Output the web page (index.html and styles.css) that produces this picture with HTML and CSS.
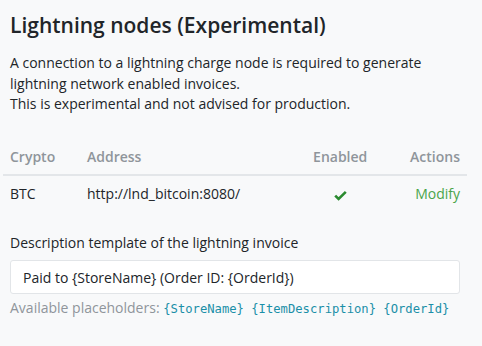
FILE: index.html
```html
<!DOCTYPE html>
<html lang="en">
<head>
  <meta charset="UTF-8">
  <title>Lightning nodes</title>
  <link rel="stylesheet" href="styles.css">
</head>
<body>
  <main class="section">
    <h3>Lightning nodes (Experimental)</h3>
    <p class="intro">
      A connection to a lightning charge node is required to generate lightning network enabled invoices.<br>
      This is experimental and not advised for production.
    </p>

    <table class="nodes">
      <thead>
        <tr>
          <th class="col-crypto">Crypto</th>
          <th>Address</th>
          <th class="center">Enabled</th>
          <th class="right">Actions</th>
        </tr>
      </thead>
      <tbody>
        <tr>
          <td>BTC</td>
          <td>http://lnd_bitcoin:8080/</td>
          <td class="center">
            <svg class="check" width="13" height="11" viewBox="0 0 13 11">
              <path d="M1.2 5.6 L4.6 9 L11.8 1.8" fill="none" stroke="#2a8a2f" stroke-width="2.6"/>
            </svg>
          </td>
          <td class="right"><a href="#">Modify</a></td>
        </tr>
      </tbody>
    </table>

    <div class="form-group">
      <label for="template">Description template of the lightning invoice</label>
      <input type="text" id="template" value="Paid to {StoreName} (Order ID: {OrderId})">
      <p class="help">Available placeholders: <code>{StoreName} {ItemDescription} {OrderId}</code></p>
    </div>
  </main>
</body>
</html>
```

FILE: styles.css
```css
/* General styles */
body {
  margin: 0;
  background-color: #f8f9fa;
  font-family: "Open Sans", Arial, sans-serif;
  font-size: 14px;
  color: #212529;
}
.section {
  padding: 10px 22px 0 10px;
}
h3 {
  margin: 0;
  font-size: 21px;
  font-weight: 600;
  line-height: 30px;
}
.intro {
  margin: 13px 0 0;
  line-height: 20.7px;
}

/* Table */
.nodes {
  width: calc(100% + 14px);
  margin: 24px 0 0 -7px;
  border-collapse: collapse;
}
.nodes th, .nodes td {
  padding: 8px 7px;
  text-align: left;
}
.nodes th {
  color: #8f959b;
  font-weight: 600;
  border-bottom: 2px solid #e3e6e9;
}
.nodes td {
  padding-top: 8px;
}
.col-crypto {
  width: 63px;
}
.nodes .center {
  text-align: center;
}
.nodes .right {
  text-align: right;
}
.check {
  vertical-align: middle;
}
.nodes a {
  color: #4aa54a;
  text-decoration: none;
}

/* Form */
.form-group {
  margin-top: 22px;
}
label {
  display: block;
  margin-bottom: 8px;
}
input {
  box-sizing: border-box;
  width: 100%;
  height: 34px;
  padding: 6px 12px;
  font-family: inherit;
  font-size: 14px;
  color: #212529;
  background: #fff;
  border: 1px solid #e2e5e8;
  border-radius: 3px;
}
.help {
  margin: 4px 0 0;
  color: #8f959b;
}
code {
  font-family: "DejaVu Sans Mono", monospace;
  font-size: 12.2px;
  color: #1b8fa8;
}
```
